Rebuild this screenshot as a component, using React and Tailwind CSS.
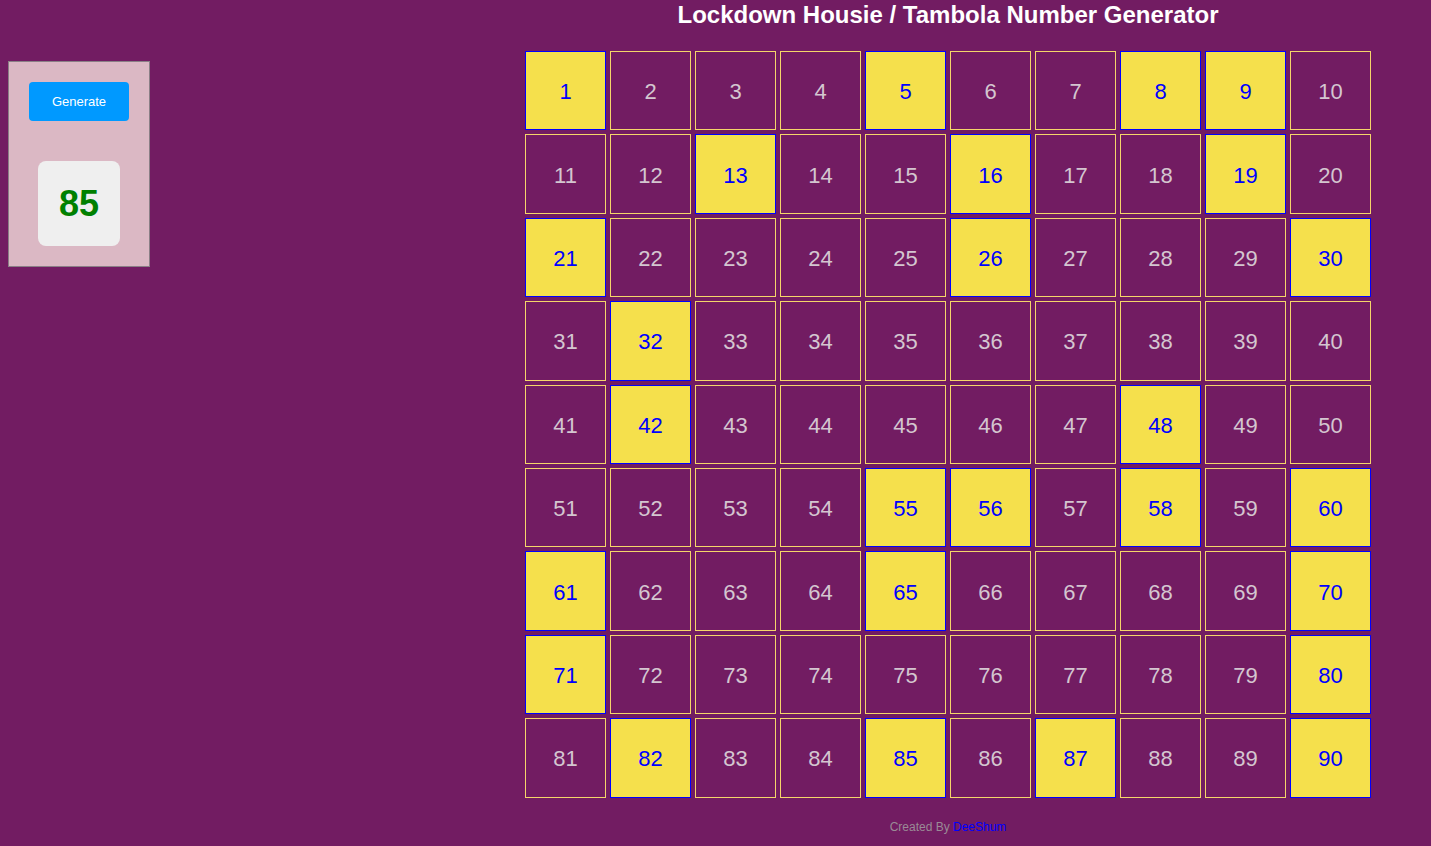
const picked = [1, 5, 8, 9, 13, 16, 19, 21, 26, 30, 32, 42, 48, 55, 56, 58, 60, 61, 65, 70, 71, 80, 82, 85, 87, 90];

function Cell({ n }) {
  const on = picked.includes(n);
  return (
    <div
      className={
        on
          ? "flex h-[79.4px] w-[81px] items-center justify-center border border-[#0000ff] bg-[#f5e04c] pt-[2px] text-[22px] text-[#0000ff]"
          : "flex h-[79.4px] w-[81px] items-center justify-center border border-[#f5d66a] pt-[2px] text-[22px] text-[#d4c6d0]"
      }
    >
      {n}
    </div>
  );
}

export default function App() {
  const nums = Array.from({ length: 90 }, (_, i) => i + 1);
  return (
    <div className="flex h-[846px] w-full bg-[#721c62] font-['Liberation_Sans',Arial,sans-serif]">
      <div className="w-[465px] shrink-0 pl-2 pt-[61px]">
        <div className="flex h-[206px] w-[142px] flex-col items-center border border-[#8a7f86] bg-[#dbb8c4] pt-5">
          <button className="h-[39px] w-[100px] rounded-[4px] bg-[#0099ff] text-[13px] text-white">
            Generate
          </button>
          <div className="mt-10 flex h-[85px] w-[82px] items-center justify-center rounded-lg bg-[#efefef] text-[36px] font-bold text-[#008000]">
            85
          </div>
        </div>
      </div>
      <div className="flex flex-1 flex-col items-center">
        <h1 className="h-[51px] text-[24px] leading-[29px] font-bold text-white">
          Lockdown Housie / Tambola Number Generator
        </h1>
        <div className="grid grid-cols-[repeat(10,81px)] gap-x-1 gap-y-1">
          {nums.map((n) => (
            <Cell key={n} n={n} />
          ))}
        </div>
        <p className="mt-[20px] text-[12px] text-[#9a8a96]">
          Created By <span className="text-[#0000ff]">DeeShum</span>
        </p>
      </div>
    </div>
  );
}
